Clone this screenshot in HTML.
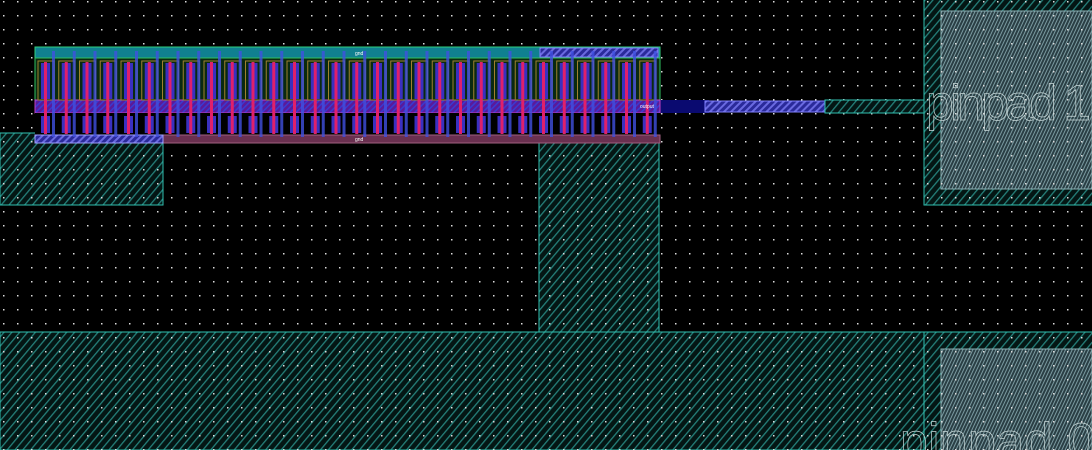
<!DOCTYPE html>
<html><head><style>
html,body{margin:0;padding:0;background:#000;width:1092px;height:450px;overflow:hidden}
svg{display:block;overflow:hidden}
</style></head><body>
<svg id="s" width="1092" height="450" xmlns="http://www.w3.org/2000/svg">
<defs>
<pattern id="hT" width="6" height="6" patternUnits="userSpaceOnUse" patternTransform="rotate(40)">
<rect width="6" height="6" fill="#041614"/><rect width="1.3" height="6" fill="#25807a"/></pattern>
<pattern id="hP" width="3" height="3" patternUnits="userSpaceOnUse" patternTransform="rotate(25)">
<rect width="3" height="3" fill="#2a3e44"/><rect width="1" height="3" fill="#7a9aa0"/></pattern>
<pattern id="hB" width="5" height="5" patternUnits="userSpaceOnUse" patternTransform="rotate(45)">
<rect width="5" height="5" fill="#2a2a9a"/><rect width="2" height="5" fill="#6a6ae0"/></pattern>
<pattern id="hM" width="4" height="4" patternUnits="userSpaceOnUse" patternTransform="rotate(45)">
<rect width="4" height="4" fill="#5a1a9a"/><rect width="1.5" height="4" fill="#3a3ad0"/></pattern>
<pattern id="dots" width="14" height="14" patternUnits="userSpaceOnUse" x="-4" y="1">
<rect x="7" y="0" width="1.5" height="1.5" fill="#ddd"/></pattern>
</defs>
<rect width="1092" height="450" fill="#000"/>
<rect x="0" y="133" width="163" height="72" fill="url(#hT)" stroke="#30c0b0"/>
<rect x="539" y="47" width="120" height="285" fill="url(#hT)" stroke="#30c0b0"/>
<rect x="0" y="332" width="1092" height="118" fill="url(#hT)" stroke="#30c0b0"/>
<rect x="924" y="-1" width="170" height="206" fill="url(#hT)" stroke="#30c0b0"/>
<rect x="941" y="11" width="151" height="178" fill="url(#hP)" stroke="#8ab0b4"/>
<rect x="924" y="332" width="170" height="120" fill="url(#hT)" stroke="#30c0b0"/>
<rect x="941" y="349" width="151" height="110" fill="url(#hP)" stroke="#8ab0b4"/>
<rect x="0" y="0" width="1092" height="450" fill="url(#dots)"/>
<rect x="659" y="100" width="50" height="13" fill="#0a0a70"/>
<rect x="705" y="101" width="120" height="11" fill="url(#hB)" stroke="#8080ff"/>
<rect x="825" y="100" width="99" height="13" fill="url(#hT)" stroke="#30c0b0"/>
<rect x="35" y="47" width="625" height="11" fill="#108090" stroke="#30d080"/>
<rect x="540" y="48" width="118" height="9" fill="url(#hB)" stroke="#8080ff"/>
<rect x="35" y="58" width="625" height="45" fill="#0a2a10" stroke="#30c060"/>
<rect x="35" y="100" width="625" height="13" fill="url(#hM)" stroke="#c040c0"/>
<rect x="35" y="113" width="625" height="22" fill="#000"/>
<rect x="35" y="135" width="625" height="8" fill="#6a3050" stroke="#a06080"/>
<rect x="35" y="135" width="128" height="8" fill="url(#hB)" stroke="#a0a0ff"/>
<g id="f"></g>
<text x="355" y="55" font-family="Liberation Sans" font-size="5" fill="#fff">gnd</text>
<text x="355" y="141" font-family="Liberation Sans" font-size="5" fill="#fff">gnd</text>
<text x="640" y="108" font-family="Liberation Sans" font-size="5" fill="#fff">output</text>
<text x="926" y="120" font-family="Liberation Sans" font-size="50" fill="none" stroke="#c8d8d8" stroke-width="0.7" textLength="165" lengthAdjust="spacing">pinpad 1</text>
<text x="900" y="458" font-family="Liberation Sans" font-size="50" fill="none" stroke="#c8d8d8" stroke-width="0.7" textLength="195" lengthAdjust="spacing">pinpad 0</text>
</svg>
<script>
var g=document.getElementById('f'),h='';
for(var i=0;i<30;i++){var x=38+i*20.75;
h+='<rect x="'+(x)+'" y="61" width="16" height="39" fill="none" stroke="#a08030" stroke-width="1"/>';
h+='<rect x="'+(x+3)+'" y="63" width="9" height="36" fill="#3a30c0"/>';
h+='<rect x="'+(x+3)+'" y="116" width="9" height="17" fill="#3a30c0"/>';
h+='<rect x="'+(x+6)+'" y="62" width="3" height="72" fill="#e0206a"/>';
h+='<rect x="'+(x+14)+'" y="51" width="3" height="86" fill="#4050e0" opacity="0.8"/>';}
g.innerHTML=h;
</script>
</body></html>
